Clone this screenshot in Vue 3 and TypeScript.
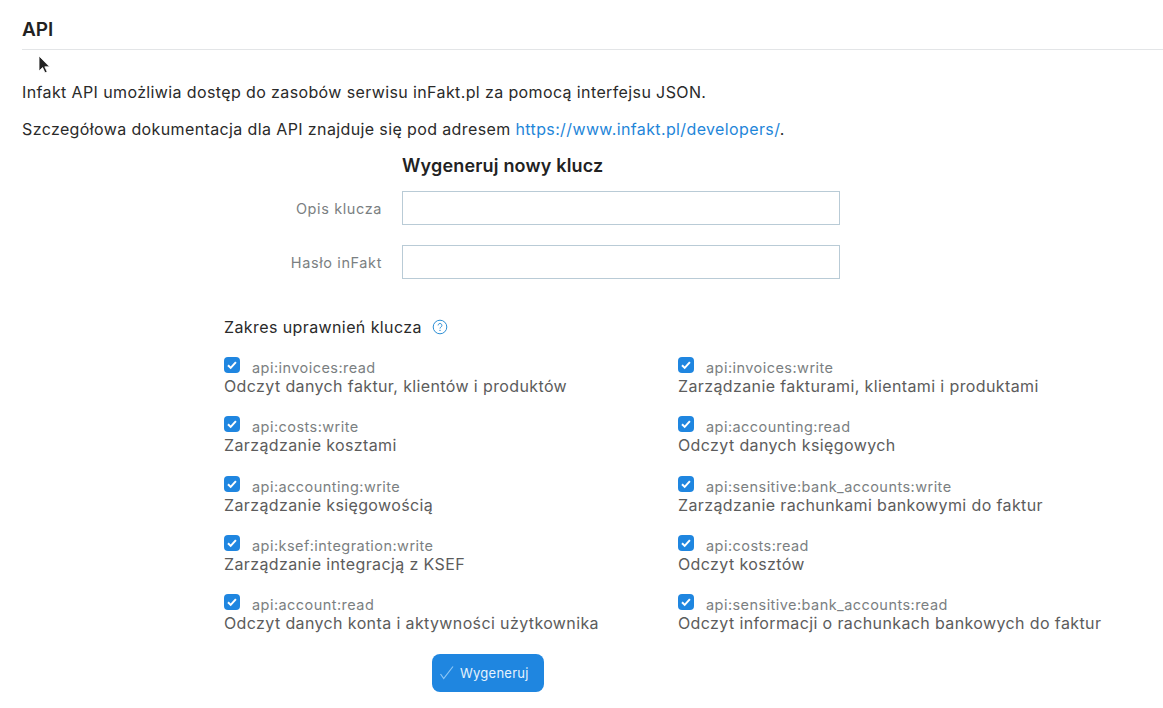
<script setup lang="ts">
interface Scope { key: string; text: string }
const scopes: Scope[] = [
  { key: 'api:invoices:read', text: 'Odczyt danych faktur, klientów i produktów' },
  { key: 'api:invoices:write', text: 'Zarządzanie fakturami, klientami i produktami' },
  { key: 'api:costs:write', text: 'Zarządzanie kosztami' },
  { key: 'api:accounting:read', text: 'Odczyt danych księgowych' },
  { key: 'api:accounting:write', text: 'Zarządzanie księgowością' },
  { key: 'api:sensitive:bank_accounts:write', text: 'Zarządzanie rachunkami bankowymi do faktur' },
  { key: 'api:ksef:integration:write', text: 'Zarządzanie integracją z KSEF' },
  { key: 'api:costs:read', text: 'Odczyt kosztów' },
  { key: 'api:account:read', text: 'Odczyt danych konta i aktywności użytkownika' },
  { key: 'api:sensitive:bank_accounts:read', text: 'Odczyt informacji o rachunkach bankowych do faktur' },
]
</script>

<template>
  <main class="page">
    <svg class="cursor" width="14" height="20" viewBox="0 0 14 20">
      <path d="M1 1v15l3.6-3.4 2.4 5.2 2.2-1-2.4-5h4.8z" fill="#222" stroke="#fff" stroke-width=".8" />
    </svg>
    <h1 class="title">API</h1>
    <p class="intro">Infakt API umożliwia dostęp do zasobów serwisu inFakt.pl za pomocą interfejsu JSON.</p>
    <p class="intro second">Szczegółowa dokumentacja dla API znajduje się pod adresem <a href="#">https://www.infakt.pl/developers/</a>.</p>

    <form class="form" @submit.prevent>
      <h2 class="form-title">Wygeneruj nowy klucz</h2>
      <div class="field">
        <label for="desc">Opis klucza</label>
        <input id="desc" type="text" />
      </div>
      <div class="field">
        <label for="pass">Hasło inFakt</label>
        <input id="pass" type="password" />
      </div>

      <section class="scopes">
        <h3 class="scopes-title">
          Zakres uprawnień klucza
          <svg class="help" width="16" height="16" viewBox="0 0 16 16" fill="none">
            <circle cx="8" cy="8" r="6.8" stroke="#2d8fd5" stroke-width="1" />
            <path d="M6.1 6.4a1.9 1.9 0 1 1 2.9 1.6c-.7.4-1 .8-1 1.5" stroke="#2d8fd5" stroke-width="1" />
            <circle cx="8" cy="11.4" r=".7" fill="#2d8fd5" />
          </svg>
        </h3>
        <div class="grid">
          <div v-for="s in scopes" :key="s.key" class="scope">
            <div class="scope-head">
              <span class="check">
                <svg width="16" height="16" viewBox="0 0 16 16" fill="none">
                  <path d="M4 8.2l2.7 2.7 5.2-5.8" stroke="#fff" stroke-width="2" />
                </svg>
              </span>
              <span class="key">{{ s.key }}</span>
            </div>
            <div class="desc">{{ s.text }}</div>
          </div>
        </div>
      </section>

      <button class="submit" type="submit">
        <svg width="16" height="16" viewBox="0 0 16 16" fill="none">
          <path d="M1.5 9l3.2 4.5L14 1.5" stroke="#8cc6f5" stroke-width="1.2" />
        </svg>
        Wygeneruj
      </button>
    </form>
  </main>
</template>

<style scoped>
.page {
  position: relative;
  width: 1163px;
  height: 708px;
  overflow: hidden;
  box-sizing: border-box;
  padding: 19px 0 0 22px;
  font-family: Inter, "Noto Sans", sans-serif;
  background: #fff;
  color: #2a2a2a;
}
.cursor { position: absolute; left: 38px; top: 55px; }
.title {
  margin: 0 0 32px;
  height: 30px;
  line-height: 22px;
  font-size: 19px;
  font-weight: 600;
  color: #222;
  border-bottom: 1px solid #e3e5e7;
}
.intro {
  margin: 0 0 17px;
  font-size: 16px;
  line-height: 20px;
  letter-spacing: .38px;
}
.intro.second { margin-bottom: 0; }
.intro a { color: #1f86d9; text-decoration: none; }
.form { display: flex; flex-direction: column; margin-top: 15px; }
.form-title {
  margin: 0 0 13px 380px;
  font-size: 18px;
  line-height: 24px;
  font-weight: 600;
  letter-spacing: .18px;
  color: #222;
}
.field { display: flex; align-items: center; height: 34px; margin-bottom: 20px; }
.field label {
  width: 360px;
  margin-right: 20px;
  text-align: right;
  font-size: 14.5px;
  letter-spacing: .6px;
  color: #7b7f82;
}
.field input {
  box-sizing: border-box;
  width: 438px;
  height: 34px;
  border: 1px solid #b9cbd6;
  background: #fff;
}
.scopes { margin: 28px 0 0 202px; }
.scopes-title {
  display: flex;
  align-items: center;
  gap: 10px;
  margin: -10px 0 20px;
  font-size: 16px;
  line-height: 20px;
  font-weight: 400;
  letter-spacing: .4px;
  color: #2a2a2a;
}
.grid {
  display: grid;
  grid-template-columns: 454px 1fr;
  row-gap: 19.25px;
}
.scope-head { display: flex; align-items: center; height: 20px; }
.check {
  width: 16px;
  height: 16px;
  border-radius: 4px;
  background: #1f86e0;
  margin-right: 12px;
  margin-top: -4px;
}
.check svg { display: block; }
.key { font-size: 14.5px; letter-spacing: .45px; color: #7b7f82; line-height: 20px; margin-top: 2px; }
.desc { font-size: 16px; line-height: 20px; letter-spacing: .38px; color: #5c5c5c; margin-top: -1px; margin-bottom: 1px; }
.submit {
  display: flex;
  align-items: center;
  gap: 5px;
  box-sizing: border-box;
  width: 112px;
  height: 38px;
  margin: 20px 0 0 410px;
  padding: 0 0 0 7px;
  border: 0;
  border-radius: 8px;
  background: #1f86e0;
  color: #e6f3fd;
  font-family: inherit;
  font-size: 13px;
  letter-spacing: .25px;
}
</style>
